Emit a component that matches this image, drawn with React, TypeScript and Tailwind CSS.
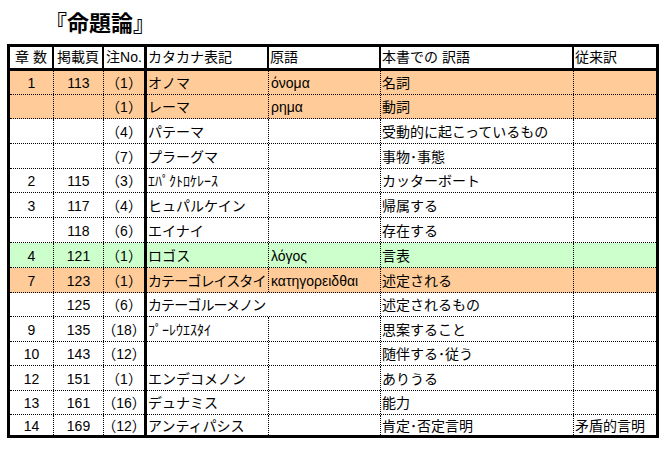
import React from 'react';

type Row = {
  c: string[];
  bg?: 'o' | 'g';
  h: number;
  overflow?: boolean;
  tight?: boolean;
};

const heights = [24, 24, 25, 25, 24, 25, 25, 25, 25, 24, 25, 24, 25, 24, 20];

const data: { c: string[]; bg?: 'o' | 'g'; overflow?: boolean; tight?: boolean }[] = [
  { c: ['1', '113', '（1）', 'オノマ', 'όνομα', '名詞', ''], bg: 'o' },
  { c: ['', '', '（1）', 'レーマ', 'ρημα', '動詞', ''], bg: 'o' },
  { c: ['', '', '（4）', 'パテーマ', '', '受動的に起こっているもの', ''] },
  { c: ['', '', '（7）', 'プラーグマ', '', '事物･事態', ''] },
  { c: ['2', '115', '（3）', 'ｴﾊﾟｸﾄﾛｹﾚｰｽ', '', 'カッターボート', ''] },
  { c: ['3', '117', '（4）', 'ヒュパルケイン', '', '帰属する', ''] },
  { c: ['', '118', '（6）', 'エイナイ', '', '存在する', ''] },
  { c: ['4', '121', '（1）', 'ロゴス', 'λόγος', '言表', ''], bg: 'g' },
  { c: ['7', '123', '（1）', 'カテーゴレイスタイ', 'κατηγορειδθαι', '述定される', ''], bg: 'o', tight: true },
  { c: ['', '125', '（6）', 'カテーゴルーメノン', '', '述定されるもの', ''], overflow: true, tight: true },
  { c: ['9', '135', '（18）', 'ﾌﾟｰﾚｳｴｽﾀｲ', '', '思案すること', ''] },
  { c: ['10', '143', '（12）', '', '', '随伴する･従う', ''] },
  { c: ['12', '151', '（1）', 'エンデコメノン', '', 'ありうる', ''] },
  { c: ['13', '161', '（16）', 'デュナミス', '', '能力', ''] },
  { c: ['14', '169', '（12）', 'アンティパシス', '', '肯定･否定言明', '矛盾的言明'] },
];

const rows: Row[] = data.map((d, i) => ({ ...d, h: heights[i] }));

const hClass: Record<number, string> = {
  20: 'h-[20px]',
  24: 'h-[24px]',
  25: 'h-[25px]',
};

function bgClass(bg?: 'o' | 'g') {
  if (bg === 'o') return 'bg-[#ffcc99]';
  if (bg === 'g') return 'bg-[#ccffcc]';
  return 'bg-white';
}

export default function App() {
  return (
    <div className="w-[672px] h-[451px] bg-white text-black font-['Liberation_Sans','Noto_Sans_CJK_JP',sans-serif]">
      <div className="h-[44px] pl-[45px] pt-[9px] text-[22px] leading-[24px] font-bold font-['Noto_Sans_CJK_JP',sans-serif]">
        『命題論』
      </div>
      <div className="ml-[7px] w-[652px] h-[394px] border-[3px] border-black flex">
        {/* Left block: cols 1-3 */}
        <div className="w-[140px] border-r-[3px] border-black flex flex-col">
          <div className="h-[24px] border-b-[3px] border-black flex text-[14px]">
            <div className="w-[44px] border-r-2 border-black flex items-center justify-center">章&nbsp;数</div>
            <div className="w-[50px] border-r-2 border-black flex items-center justify-center">掲載頁</div>
            <div className="w-[40px] flex items-center justify-center whitespace-nowrap">注No.</div>
          </div>
          {rows.map((r, i) => (
            <div
              key={i}
              className={`${hClass[r.h]} ${bgClass(r.bg)} flex ${i < rows.length - 1 ? 'border-b border-dotted border-black' : ''}`}
            >
              <div className="w-[44px] border-r border-dotted border-black flex items-center justify-center pt-[2px] text-[14px]">
                {r.c[0]}
              </div>
              <div className="w-[50px] border-r border-dotted border-black flex items-center justify-center pt-[2px] text-[14px]">
                {r.c[1]}
              </div>
              <div className="w-[40px] flex items-center justify-center pt-[2px] text-[14px] whitespace-nowrap">
                {r.c[2]}
              </div>
            </div>
          ))}
        </div>
        {/* Right block: cols 4-7 */}
        <div className="w-[509px] flex flex-col">
          <div className="h-[24px] border-b-[3px] border-black flex text-[14px]">
            <div className="w-[122px] border-r-2 border-black flex items-center pl-px">カタカナ表記</div>
            <div className="w-[112px] border-r-2 border-black flex items-center pl-px">原語</div>
            <div className="w-[193px] border-r-2 border-black flex items-center pl-px">本書での 訳語</div>
            <div className="w-[82px] flex items-center pl-px">従来訳</div>
          </div>
          {rows.map((r, i) => (
            <div
              key={i}
              className={`${hClass[r.h]} ${bgClass(r.bg)} flex text-[14px] ${i < rows.length - 1 ? 'border-b border-dotted border-black' : ''}`}
            >
              <div
                className={`w-[122px] shrink-0 border-r border-dotted flex items-center pl-px pt-[2px] whitespace-nowrap ${r.tight ? 'tracking-[-0.9px]' : ''} ${r.overflow ? 'border-transparent overflow-visible' : 'border-black overflow-hidden'}`}
              >
                {r.c[3]}
              </div>
              <div className="w-[112px] shrink-0 border-r border-dotted border-black flex items-center pl-[2px] pt-[2px] whitespace-nowrap overflow-hidden">
                {r.c[4]}
              </div>
              <div className="w-[193px] shrink-0 border-r border-dotted border-black flex items-center pl-px pt-[2px] whitespace-nowrap">
                {r.c[5]}
              </div>
              <div className="w-[82px] shrink-0 flex items-center pl-px pt-[2px] whitespace-nowrap">
                {r.c[6]}
              </div>
            </div>
          ))}
        </div>
      </div>
    </div>
  );
}
